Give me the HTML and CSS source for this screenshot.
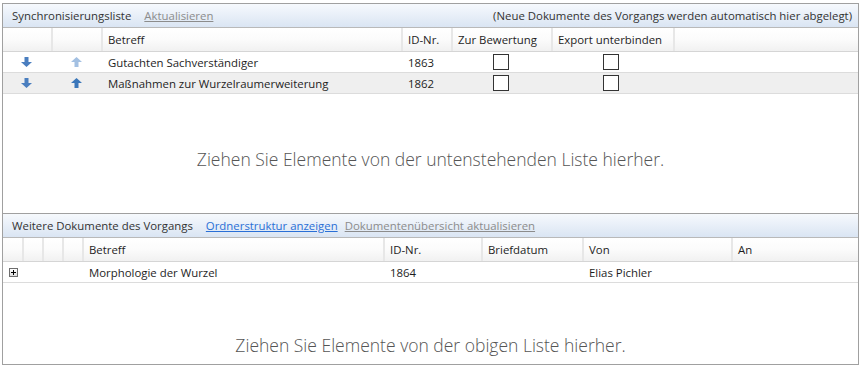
FILE: index.html
```html
<!DOCTYPE html>
<html lang="de">
<head>
  <meta charset="UTF-8">
  <title>Synchronisierungsliste</title>
  <link rel="stylesheet" href="styles.css">
</head>
<body>
  <div class="frame">
    <div class="panel panel-top">
      <div class="titlebar">
        <span class="title">Synchronisierungsliste</span>
        <a class="link disabled" href="#">Aktualisieren</a>
        <span class="hint">(Neue Dokumente des Vorgangs werden automatisch hier abgelegt)</span>
      </div>
      <div class="grid grid-sync head">
        <div class="cell"></div>
        <div class="cell"></div>
        <div class="cell">Betreff</div>
        <div class="cell">ID-Nr.</div>
        <div class="cell">Zur Bewertung</div>
        <div class="cell">Export unterbinden</div>
        <div class="cell last"></div>
      </div>
      <div class="grid grid-sync row">
        <div class="cell icon">
          <svg width="11" height="10" viewBox="0 0 11 10"><path d="M3.5 0h4v5h3.5l-5.5 5-5.5-5h3.5z" fill="#4a7ebf"/></svg>
        </div>
        <div class="cell icon">
          <svg width="11" height="10" viewBox="0 0 11 10"><path d="M3.5 10h4V5h3.5L5.5 0 0 5h3.5z" fill="#a3c0e2"/></svg>
        </div>
        <div class="cell">Gutachten Sachverständiger</div>
        <div class="cell">1863</div>
        <div class="cell check-a"><span class="box"></span></div>
        <div class="cell check-b"><span class="box"></span></div>
        <div class="cell"></div>
      </div>
      <div class="grid grid-sync row alt">
        <div class="cell icon">
          <svg width="11" height="10" viewBox="0 0 11 10"><path d="M3.5 0h4v5h3.5l-5.5 5-5.5-5h3.5z" fill="#4a7ebf"/></svg>
        </div>
        <div class="cell icon">
          <svg width="11" height="10" viewBox="0 0 11 10"><path d="M3.5 10h4V5h3.5L5.5 0 0 5h3.5z" fill="#3b77ba"/></svg>
        </div>
        <div class="cell">Maßnahmen zur Wurzelraumerweiterung</div>
        <div class="cell">1862</div>
        <div class="cell check-a"><span class="box"></span></div>
        <div class="cell check-b"><span class="box"></span></div>
        <div class="cell"></div>
      </div>
      <div class="drop drop-top">Ziehen Sie Elemente von der untenstehenden Liste hierher.</div>
    </div>

    <div class="panel panel-bottom">
      <div class="titlebar">
        <span class="title">Weitere Dokumente des Vorgangs</span>
        <a class="link" href="#">Ordnerstruktur anzeigen</a>
        <a class="link disabled" href="#">Dokumentenübersicht aktualisieren</a>
      </div>
      <div class="grid grid-docs head">
        <div class="cell"></div>
        <div class="cell"></div>
        <div class="cell"></div>
        <div class="cell"></div>
        <div class="cell">Betreff</div>
        <div class="cell">ID-Nr.</div>
        <div class="cell">Briefdatum</div>
        <div class="cell">Von</div>
        <div class="cell last">An</div>
      </div>
      <div class="grid grid-docs row">
        <div class="cell expand"><span class="plus"></span></div>
        <div class="cell"></div>
        <div class="cell"></div>
        <div class="cell"></div>
        <div class="cell">Morphologie der Wurzel</div>
        <div class="cell">1864</div>
        <div class="cell"></div>
        <div class="cell">Elias Pichler</div>
        <div class="cell"></div>
      </div>
      <div class="drop drop-bottom">Ziehen Sie Elemente von der obigen Liste hierher.</div>
    </div>
  </div>
</body>
</html>
```

FILE: styles.css
```css
body {
  margin: 0;
  background: #fff;
  font-family: "Segoe UI", "Open Sans", sans-serif;
  font-size: 11.4px;
  color: #1e1e1e;
}
.frame {
  box-sizing: border-box;
  width: 857px;
  height: 362px;
  margin: 3px 0 0 2px;
  border: 1px solid #a0a0a0;
  display: flex;
  flex-direction: column;
}
.panel {
  display: flex;
  flex-direction: column;
}
.panel-top {
  height: 209px;
  border-bottom: 1px solid #a0a0a0;
}
.panel-bottom {
  flex: 1;
}
.titlebar {
  height: 23px;
  border-bottom: 1px solid #b9b9b9;
  background: linear-gradient(#f6f9fd, #e8eff8 50%, #dae5f3);
  display: flex;
  align-items: center;
  padding: 0 6px 0 9px;
  color: #333;
}
.title {
  margin-right: 13px;
}
.link {
  color: #2a6fd6;
  text-decoration: underline;
  margin-right: 7px;
}
.link.disabled {
  color: #8c8c8c;
}
.hint {
  margin-left: auto;
}
.grid {
  display: grid;
}
.grid-sync {
  grid-template-columns: 50px 50px 300px 50px 100px 122px 1fr;
}
.grid-docs {
  grid-template-columns: 21px 20px 20px 20px 301px 98px 101px 149px 1fr;
}
.head {
  height: 23px;
  background: linear-gradient(#fff, #fbfbfb 50%, #f1f1f1);
  border-bottom: 1px solid #d5d5d5;
}
.head .cell {
  border-right: 2px solid #e7e7e7;
}
.head .cell.last {
  border-right: none;
}
.cell {
  display: flex;
  align-items: center;
  padding-left: 5px;
  white-space: nowrap;
  overflow: hidden;
}
.row {
  height: 20px;
  border-bottom: 1px solid #dcdcdc;
}
.row.alt {
  background: #efefef;
}
.icon {
  padding-left: 0;
  padding-right: 4px;
  justify-content: center;
}
.box {
  box-sizing: border-box;
  width: 16px;
  height: 16px;
  border: 1px solid #333;
  background: #fff;
}
.check-a {
  padding-left: 40px;
}
.check-b {
  padding-left: 50px;
}
.expand {
  padding-left: 6px;
}
.plus {
  box-sizing: border-box;
  position: relative;
  width: 9px;
  height: 9px;
  border: 1px solid #6d6d6d;
  background: linear-gradient(#fff, #dcdcdc);
}
.plus::before,
.plus::after {
  content: "";
  position: absolute;
  background: #000;
}
.plus::before {
  left: 1px;
  top: 3px;
  width: 5px;
  height: 1px;
}
.plus::after {
  left: 3px;
  top: 1px;
  width: 1px;
  height: 5px;
}
.drop {
  flex: 1;
  display: flex;
  justify-content: center;
  font-weight: 300;
  font-size: 17.5px;
  color: #555;
}
.drop-top {
  align-items: center;
  padding-top: 10px;
}
.drop-bottom {
  align-items: flex-end;
  padding-bottom: 7px;
}
```
